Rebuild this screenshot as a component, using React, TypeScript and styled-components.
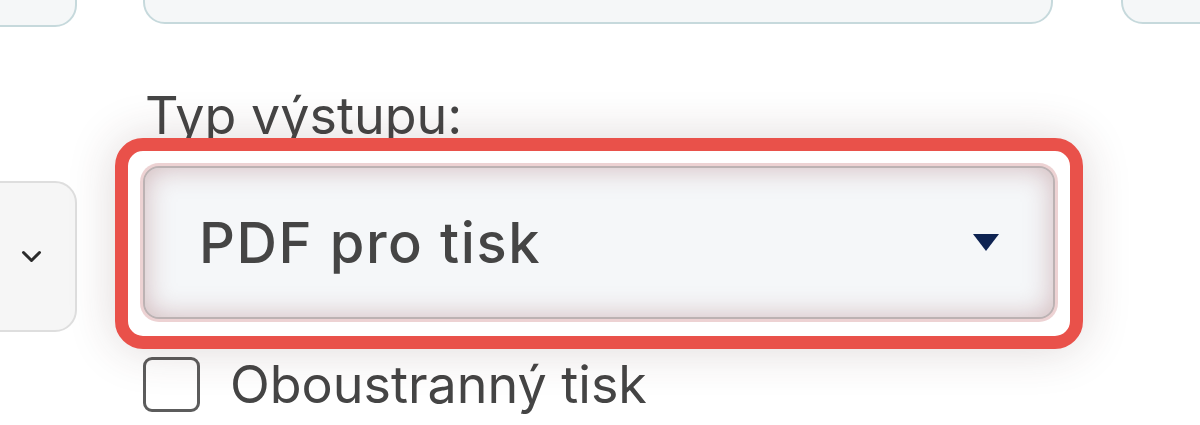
import styled, { createGlobalStyle } from "styled-components";

const GlobalStyle = createGlobalStyle`
  *, *::before, *::after {
    box-sizing: border-box;
  }
  html, body {
    margin: 0;
    padding: 0;
    background: #ffffff;
  }
  body {
    font-family: Inter, "Noto Sans", sans-serif;
    color: #464646;
  }
`;

export default function App() {
  return (
    <>
      <GlobalStyle />
      <Page>
        <SideColumn>
          <EdgeField />
          <SideSelect>
            <svg width="21" height="13" viewBox="0 0 21 13" fill="none">
              <path d="M2.5 2.5l8 8 8-8" stroke="#2b2b2b" strokeWidth="3" strokeLinecap="round" strokeLinejoin="round" />
            </svg>
          </SideSelect>
        </SideColumn>

        <MainColumn>
          <TopField />
          <Label>Typ výstupu:</Label>
          <FocusRing>
            <Select>
              <SelectValue>PDF pro tisk</SelectValue>
              <Caret viewBox="0 0 26 17">
                <path d="M0 0h26L13 17z" fill="#0e2352" />
              </Caret>
            </Select>
          </FocusRing>
          <CheckRow>
            <CheckBox />
            <CheckText>Oboustranný tisk</CheckText>
          </CheckRow>
        </MainColumn>

        <SideColumn>
          <EdgeField $right />
        </SideColumn>
      </Page>
    </>
  );
}

const Page = styled.div`
  display: grid;
  grid-template-columns: 77px 968px 1fr;
  column-gap: 38px;
  height: 425px;
  overflow: hidden;
`;

const SideColumn = styled.div`
  display: flex;
  flex-direction: column;
`;

const EdgeField = styled.div<{ $right?: boolean }>`
  height: 100px;
  margin-top: ${(p) => (p.$right ? "-76px" : "-73px")};
  ${(p) => (p.$right ? "margin-right: -60px;" : "margin-left: -40px;")}
  border: 2px solid #c6d9dc;
  border-radius: 22px;
  background: #f5f7f8;
`;

const SideSelect = styled.div`
  height: 151px;
  margin-top: 154px;
  margin-left: -40px;
  border: 2px solid #dedede;
  border-radius: 22px;
  background: #f6f6f6;
  display: flex;
  align-items: center;
  justify-content: flex-end;
  padding-right: 33px;
`;

const MainColumn = styled.div`
  display: flex;
  flex-direction: column;
`;

const TopField = styled.div`
  height: 100px;
  margin: -76px 30px 0 28px;
  border: 2px solid #c6d9dc;
  border-radius: 22px;
  background: #f5f7f8;
`;

const Label = styled.div`
  margin: 66px 0 0 30px;
  font-size: 52px;
  line-height: 52px;
  color: #454545;
`;

const FocusRing = styled.div`
  position: relative;
  z-index: 1;
  margin-top: -4px;
  border: 13px solid #e9514a;
  border-radius: 28px;
  padding: 15px 15px 17px 15px;
  background: #ffffff;
  box-shadow: 0 0 48px rgba(70, 40, 40, 0.18);
`;

const Select = styled.div`
  height: 153px;
  display: flex;
  align-items: center;
  justify-content: space-between;
  padding: 0 54px;
  border: 2px solid #bcb2b3;
  border-radius: 16px;
  background: #f5f7f9;
  box-shadow: 0 0 0 3px rgba(225, 180, 182, 0.6),
    inset 0 0 28px rgba(170, 115, 120, 0.48);
`;

const SelectValue = styled.span`
  font-size: 56px;
  font-weight: 500;
  letter-spacing: 1.6px;
  line-height: 1;
  color: #454545;
`;

const Caret = styled.svg`
  width: 26px;
  height: 17px;
`;

const CheckRow = styled.label`
  display: flex;
  align-items: center;
  gap: 30px;
  margin: 8px 0 0 28px;
`;

const CheckBox = styled.span`
  width: 57px;
  height: 55px;
  border: 3px solid #5c5c5c;
  border-radius: 9px;
  background: #ffffff;
`;

const CheckText = styled.span`
  font-size: 52px;
  line-height: 55px;
  color: #454545;
`;
